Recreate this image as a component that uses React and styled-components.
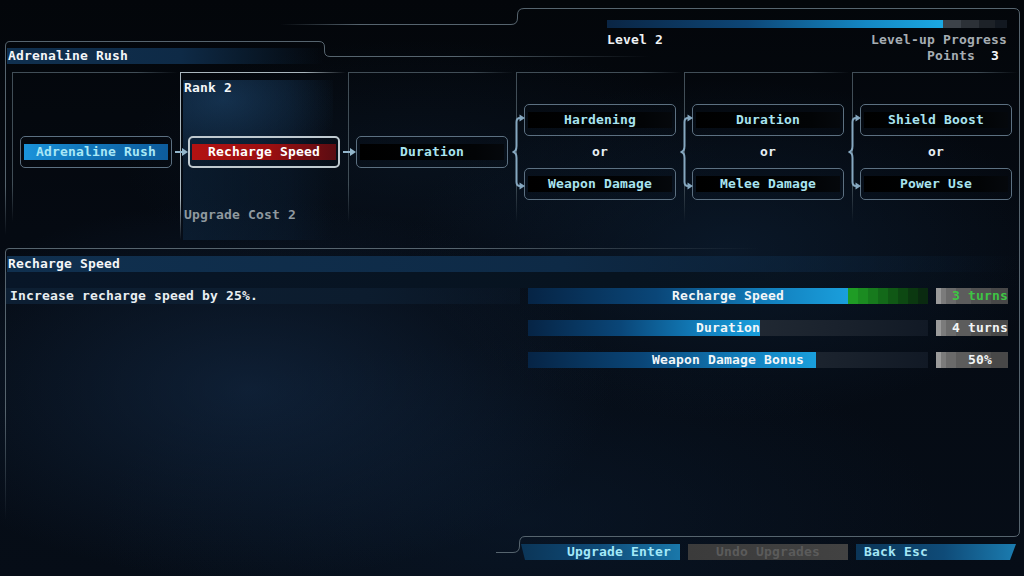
import React from 'react'
import styled, { createGlobalStyle, css } from 'styled-components'

const Global = createGlobalStyle`
  html, body { margin: 0; padding: 0; background: #03060b; }
  body { font-family: "DejaVu Sans Mono", "Liberation Mono", monospace; }
`;

const Screen = styled.div`
  position: relative;
  width: 1024px;
  height: 576px;
  overflow: hidden;
  display: flex;
  flex-direction: column;
  font: bold 13px/16px "DejaVu Sans Mono", "Liberation Mono", monospace;
  letter-spacing: 0.17px;
  color: #eef2f4;
  white-space: pre;
  background:
    radial-gradient(ellipse 360px 190px at 250px 390px, rgba(22,48,80,0.55), transparent),
    radial-gradient(ellipse 320px 170px at 730px 250px, rgba(16,40,66,0.45), transparent),
    radial-gradient(ellipse 420px 180px at 520px 520px, rgba(12,30,52,0.45), transparent),
    radial-gradient(ellipse 300px 120px at 420px 160px, rgba(14,32,52,0.35), transparent),
    linear-gradient(180deg, #03060a 0%, #050a12 40%, #060d17 100%);
`;

const FrameLayer = styled.svg`
  position: absolute;
  left: 0;
  top: 0;
  pointer-events: none;
`;

const Header = styled.header`
  height: 64px;
  display: flex;
  justify-content: space-between;
  align-items: flex-end;
  padding: 0 17px 0 7px;
`;

const TitleBar = styled.div`
  width: ${p => p.$w};
  height: 16px;
  margin-left: ${p => p.$indent || '0px'};
  padding-left: 1px;
  color: #f4f6f8;
  background: linear-gradient(90deg, #10304f 0%, #0e2a46 55%, rgba(14,42,70,0) 100%);
`;

const LevelBlock = styled.div`
  width: 400px;
  display: flex;
  flex-direction: column;
`;

const XpBar = styled.div`
  height: 8px;
  margin-bottom: 4px;
  background: linear-gradient(90deg,
    #0a2544 0%, #0d4676 35%, #1488c4 65%, #1ba8e2 84%,
    #3c4249 84%, #3c4249 88.5%, #2c3137 88.5%, #2c3137 93%,
    #1d2228 93%, #1d2228 97%, #121820 97%);
`;

const LevelRow = styled.div`
  display: flex;
  justify-content: space-between;
`;

const Muted = styled.span`
  color: #a6adb3;
`;

const PointsRow = styled.div`
  display: flex;
  justify-content: flex-end;
  padding-right: 8px;
  color: #a6adb3;
`;

const PointsValue = styled.span`
  margin-left: 16px;
  color: #f4f6f8;
`;

const Tree = styled.div`
  display: flex;
  margin: 8px 0 0 12px;
  height: 168px;
`;

const Column = styled.div`
  position: relative;
  width: 168px;
  box-sizing: border-box;
  display: grid;
  grid-template-rows: 32px 32px 32px 32px 1fr;
  padding: 0 8px;
  --line: ${p => (p.$selected ? '#a9b6bd' : '#414e57')};
  ${p => p.$selected && css`
    background:
      radial-gradient(ellipse 120px 70px at 40px 20px, rgba(30,70,110,0.55), transparent),
      linear-gradient(90deg, rgba(14,40,66,0.55) 0%, rgba(12,34,58,0.35) 70%, rgba(10,26,44,0) 100%);
    background-repeat: no-repeat;
    background-position: 3px 8px;
    background-size: 150px 160px;
  `}
  &::before {
    content: "";
    position: absolute;
    left: 0;
    top: 0;
    right: 2px;
    height: 1px;
    background: linear-gradient(90deg, var(--line) 0%, var(--line) 75%, rgba(65,78,87,0) 100%);
  }
  &::after {
    content: "";
    position: absolute;
    left: 0;
    top: 0;
    width: 1px;
    height: ${p => (p.$selected ? '168px' : '150px')};
    background: linear-gradient(180deg, var(--line) 0%, var(--line) 75%, rgba(65,78,87,0) 100%);
  }
`;

const RankLabel = styled.div`
  grid-row: 1;
  margin: 8px 0 0 -4px;
  color: #f4f6f8;
`;

const CostLabel = styled.div`
  grid-row: 5;
  margin: 7px 0 0 -4px;
  color: #8f999f;
`;

const Node = styled.div`
  grid-row: ${p => p.$row};
  box-sizing: border-box;
  height: 32px;
  border: ${p => (p.$variant === 'selected' ? '2px solid #bfc9cf' : '1px solid #5c7081')};
  border-radius: 5px;
  padding: 0 ${p => (p.$variant === 'selected' ? '2px' : '3px')};
  display: flex;
  align-items: center;
`;

const fills = {
  owned: css`
    background: linear-gradient(90deg, #1b93da 0%, #1277bb 40%, #0d5c9c 100%);
    color: #a9e8f6;
  `,
  selected: css`
    background: linear-gradient(90deg, #b31212 0%, #9a0f10 55%, #5a0c12 100%);
    color: #ffffff;
  `,
  locked: css`
    background: linear-gradient(90deg, #000 0%, #020406 80%, #05080c 100%);
    color: #a9e4f0;
  `,
};

const NodeFill = styled.div`
  flex: 1;
  height: 16px;
  text-align: center;
  ${p => fills[p.$variant]}
`;

const OrLabel = styled.div`
  grid-row: 3;
  align-self: center;
  text-align: center;
  color: #e6eef2;
`;

const Connector = styled.svg`
  position: absolute;
  z-index: 2;
  left: ${p => p.$left}px;
  top: ${p => p.$top}px;
  overflow: visible;
`;

const Details = styled.section`
  flex: 1;
  margin-top: 16px;
  display: flex;
  flex-direction: column;
`;

const Band = styled.div`
  height: 16px;
  margin-left: 5px;
  background: linear-gradient(90deg, #081628 0%, #07131f 60%, rgba(7,19,31,0) 100%);
`;

const DetailRow = styled.div`
  display: flex;
`;

const Description = styled.div`
  flex: 1;
  height: 16px;
  margin-left: 5px;
  padding-left: 5px;
  color: #e9eef1;
  background: linear-gradient(90deg, #0d1f33 0%, #0c1c2e 70%, rgba(12,28,46,0.3) 100%);
`;

const Stats = styled.div`
  display: grid;
  grid-template-columns: 400px 72px;
  column-gap: 8px;
  row-gap: 16px;
  margin: 0 16px 0 8px;
`;

const StatBar = styled.div`
  display: grid;
  height: 16px;
  background: linear-gradient(90deg, #2c353e 0%, #262e38 40%, #19212c 80%, #111925 100%);
  & > * { grid-area: 1 / 1; }
`;

const BarTrack = styled.div`
  display: flex;
`;

const BarFill = styled.div`
  background: linear-gradient(90deg, #062445 0%, #0a4678 40%, #127fbd 75%, #1a9fdc 100%);
`;

const BarBonus = styled.div`
  width: 80px;
  background: linear-gradient(90deg,
    #1f9c25 0 10px, #1b8b21 10px 20px, #177a1d 20px 30px, #136919 30px 40px,
    #105815 40px 50px, #0d4812 50px 60px, #0b3810 60px 70px, #0a2a10 70px 80px);
`;

const BarLabel = styled.div`
  text-align: center;
  color: #f2f6f8;
`;

const StatValue = styled.div`
  height: 16px;
  padding-left: 16px;
  text-align: center;
  color: ${p => (p.$better ? '#3ec544' : '#f2f4f5')};
  background: linear-gradient(90deg,
    #9a9a9a 0 5px, #7b7b7b 5px 10px, #6a6a6a 10px 20px,
    #5c5c5c 20px 35px, #515151 35px 55px, #484848 55px);
`;

const Footer = styled.footer`
  height: 32px;
  display: flex;
  justify-content: flex-end;
  align-items: flex-start;
  gap: 8px;
  padding-right: 8px;
`;

const buttonKinds = {
  primary: css`
    justify-content: flex-end;
    padding-right: 9px;
    color: #a4e9f8;
    background: linear-gradient(90deg, #0b3557 0%, #0f4b78 50%, #1a78aa 100%);
    clip-path: polygon(1px 0, 100% 0, 100% 100%, 5px 100%);
  `,
  disabled: css`
    justify-content: center;
    color: #5b5b5b;
    background: linear-gradient(90deg, #3b3b3b 0%, #424242 100%);
  `,
  back: css`
    justify-content: flex-start;
    padding-left: 8px;
    color: #a4e6f6;
    background: linear-gradient(90deg, #0b3557 0%, #0f4b78 55%, #1b7cb0 100%);
    clip-path: polygon(0 0, 100% 0, calc(100% - 6px) 100%, 0 100%);
  `,
};

const Button = styled.div`
  width: 160px;
  height: 16px;
  box-sizing: border-box;
  display: flex;
  align-items: center;
  ${p => buttonKinds[p.$kind]}
`;

function Arrow() {
  return (
    <Connector $left={-5} $top={75} width="13" height="10">
      <line x1="0" y1="5" x2="9" y2="5" stroke="#93b6cb" strokeWidth="2" />
      <polygon points="7,1 13,5 7,9" fill="#93b6cb" />
    </Connector>
  )
}

function Brace() {
  return (
    <Connector $left={-5} $top={43} width="14" height="74">
      <path d="M 10 3 H 9 Q 5.5 3 5.5 7 V 31 Q 5.5 37 1.5 37 Q 5.5 37 5.5 43 V 67 Q 5.5 71 9 71 H 10"
        fill="none" stroke="#86a8c0" strokeWidth="2" />
      <polygon points="8.5,-0.5 14,3 8.5,6.5" fill="#86a8c0" />
      <polygon points="8.5,67.5 14,71 8.5,74.5" fill="#86a8c0" />
    </Connector>
  )
}

function Frame() {
  return (
    <FrameLayer width="1024" height="576" viewBox="0 0 1024 576">
      <defs>
        <linearGradient id="fadeL" gradientUnits="userSpaceOnUse" x1="280" y1="0" x2="360" y2="0">
          <stop offset="0" stopColor="#56646e" stopOpacity="0" />
          <stop offset="1" stopColor="#56646e" />
        </linearGradient>
        <linearGradient id="fadeR1" gradientUnits="userSpaceOnUse" x1="0" y1="0" x2="650" y2="0">
          <stop offset="0.7" stopColor="#56646e" />
          <stop offset="1" stopColor="#56646e" stopOpacity="0" />
        </linearGradient>
        <linearGradient id="fadeR2" gradientUnits="userSpaceOnUse" x1="0" y1="0" x2="760" y2="0">
          <stop offset="0.6" stopColor="#56646e" />
          <stop offset="1" stopColor="#56646e" stopOpacity="0" />
        </linearGradient>
        <linearGradient id="fadeD1" gradientUnits="userSpaceOnUse" x1="0" y1="40" x2="0" y2="235">
          <stop offset="0.75" stopColor="#56646e" />
          <stop offset="1" stopColor="#56646e" stopOpacity="0" />
        </linearGradient>
        <linearGradient id="fadeD2" gradientUnits="userSpaceOnUse" x1="0" y1="248" x2="0" y2="520">
          <stop offset="0.6" stopColor="#56646e" />
          <stop offset="1" stopColor="#56646e" stopOpacity="0" />
        </linearGradient>
      </defs>
      <path
        d="M 280 24.5 H 511 Q 517.5 24.5 517.5 18 V 15 Q 517.5 8.5 524 8.5 H 1014 Q 1019.5 8.5 1019.5 14 V 531 Q 1019.5 536.5 1014 536.5 H 525 Q 519.5 536.5 519.5 543 V 546 Q 519.5 552.5 513 552.5 H 496"
        fill="none" stroke="url(#fadeL)" strokeWidth="1" />
      <path d="M 10 41.5 H 319 Q 324.5 41.5 324.5 47 V 51 Q 324.5 56.5 330 56.5 H 650"
        fill="none" stroke="url(#fadeR1)" strokeWidth="1" />
      <path d="M 5.5 235 V 46 Q 5.5 41.5 10 41.5"
        fill="none" stroke="url(#fadeD1)" strokeWidth="1" />
      <path d="M 9 248.5 H 760" fill="none" stroke="url(#fadeR2)" strokeWidth="1" />
      <path d="M 5.5 520 V 252 Q 5.5 248.5 9 248.5" fill="none" stroke="url(#fadeD2)" strokeWidth="1" />
    </FrameLayer>
  )
}

const optionPairs = [
  ['Hardening', 'Weapon Damage'],
  ['Duration', 'Melee Damage'],
  ['Shield Boost', 'Power Use'],
];

const stats = [
  { name: 'Recharge Speed', fill: 80, bonus: true, value: '3 turns', better: true },
  { name: 'Duration', fill: 58, value: '4 turns' },
  { name: 'Weapon Damage Bonus', fill: 72, value: '50%' },
];

export default function App() {
  return (
    <Screen>
      <Global />
      <Frame />
      <Header>
        <TitleBar $w="316px">Adrenaline Rush</TitleBar>
        <LevelBlock>
          <XpBar />
          <LevelRow>
            <span>Level 2</span>
            <Muted>Level-up Progress</Muted>
          </LevelRow>
          <PointsRow>
            Points<PointsValue>3</PointsValue>
          </PointsRow>
        </LevelBlock>
      </Header>

      <Tree>
        <Column>
          <Node $row={3} $variant="owned"><NodeFill $variant="owned">Adrenaline Rush</NodeFill></Node>
        </Column>
        <Column $selected>
          <Arrow />
          <RankLabel>Rank 2</RankLabel>
          <Node $row={3} $variant="selected"><NodeFill $variant="selected">Recharge Speed</NodeFill></Node>
          <CostLabel>Upgrade Cost 2</CostLabel>
        </Column>
        <Column>
          <Arrow />
          <Node $row={3} $variant="locked"><NodeFill $variant="locked">Duration</NodeFill></Node>
        </Column>
        {optionPairs.map(([a, b]) => (
          <Column key={a}>
            <Brace />
            <Node $row={2} $variant="locked"><NodeFill $variant="locked">{a}</NodeFill></Node>
            <OrLabel>or</OrLabel>
            <Node $row={4} $variant="locked"><NodeFill $variant="locked">{b}</NodeFill></Node>
          </Column>
        ))}
      </Tree>

      <Details>
        <TitleBar $w="1010px" $indent="7px">Recharge Speed</TitleBar>
        <Band />
        <DetailRow>
          <Description>Increase recharge speed by 25%.</Description>
          <Stats>
            {stats.map(s => (
              <React.Fragment key={s.name}>
                <StatBar>
                  <BarTrack>
                    <BarFill style={{ width: `${s.fill}%` }} />
                    {s.bonus && <BarBonus />}
                  </BarTrack>
                  <BarLabel>{s.name}</BarLabel>
                </StatBar>
                <StatValue $better={s.better}>{s.value}</StatValue>
              </React.Fragment>
            ))}
          </Stats>
        </DetailRow>
      </Details>

      <Footer>
        <Button $kind="primary">Upgrade Enter</Button>
        <Button $kind="disabled">Undo Upgrades</Button>
        <Button $kind="back">Back Esc</Button>
      </Footer>
    </Screen>
  )
}
